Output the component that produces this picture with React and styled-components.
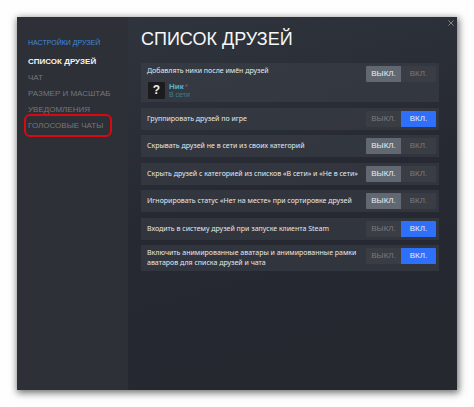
import { useState } from 'react'
import styled, { createGlobalStyle } from 'styled-components';

const sections = ["Список друзей", "Чат", "Размер и масштаб", "Уведомления", "Голосовые чаты"];

const options = [
    { id: "nicks", label: "Добавлять ники после имён друзей", on: false, preview: true },
    { id: "group", label: "Группировать друзей по игре", on: true },
    { id: "offline", label: "Скрывать друзей не в сети из своих категорий", on: false },
    { id: "category", label: "Скрыть друзей с категорией из списков «В сети» и «Не в сети»", on: false },
    { id: "away", label: "Игнорировать статус «Нет на месте» при сортировке друзей", on: false },
    { id: "login", label: "Входить в систему друзей при запуске клиента Steam", on: true },
    { id: "avatars", label: "Включить анимированные аватары и анимированные рамки аватаров для списка друзей и чата", on: true },
];

function Option({ option }) {
    const [on, setOn] = useState(option.on);
    return (
        <Row>
            <div>
                <Label id={option.id}>{option.label}</Label>
                {option.preview && (
                    <Friend>
                        <Avatar>?</Avatar>
                        <div>
                            <Nick>Ник<sup>*</sup></Nick>
                            <Status>В сети</Status>
                        </div>
                    </Friend>
                )}
            </div>
            <Toggle role="group" aria-labelledby={option.id}>
                <ToggleButton type="button" $active={!on} aria-pressed={!on} onClick={() => setOn(false)}>Выкл.</ToggleButton>
                <ToggleButton type="button" $on $active={on} aria-pressed={on} onClick={() => setOn(true)}>Вкл.</ToggleButton>
            </Toggle>
        </Row>
    )
}

export default function App() {
    const [current, setCurrent] = useState(sections[0]);
    return (
        <Page>
            <GlobalStyle />
            <Dialog>
                <Sidebar>
                    <SidebarTitle>Настройки друзей</SidebarTitle>
                    {sections.map((name, i) => (
                        <SectionButton
                            key={name}
                            type="button"
                            $current={name === current}
                            $marked={i === sections.length - 1}
                            onClick={() => setCurrent(name)}
                        >
                            {name}
                        </SectionButton>
                    ))}
                </Sidebar>
                <Content>
                    <Title>Список друзей</Title>
                    <Options>
                        {options.map(option => <Option key={option.id} option={option} />)}
                    </Options>
                </Content>
                <Close type="button" aria-label="Закрыть">
                    <svg width="6" height="6" viewBox="0 0 6 6" stroke="currentColor" strokeWidth="0.7">
                        <path d="M0.4 0.4L5.6 5.6M5.6 0.4L0.4 5.6" />
                    </svg>
                </Close>
            </Dialog>
        </Page>
    )
}

const GlobalStyle = createGlobalStyle`
  * {
    box-sizing: border-box;
  }
  body {
    margin: 0;
    background: #fefefe;
    font-family: "Liberation Sans", Arial, sans-serif;
  }
  button {
    border: 0;
    padding: 0;
    background: none;
    font: inherit;
    cursor: pointer;
  }
`;

const Page = styled.main`
  min-height: 100vh;
  display: flex;
  padding: 17px;
`;

const Dialog = styled.div`
  position: relative;
  flex: 1;
  display: flex;
  background: linear-gradient(165deg, #31363e 0%, #262931 50%, #25282f 100%);
  box-shadow: 1px 2px 7px 1px rgba(0, 0, 0, 0.55);
`;

const Sidebar = styled.nav`
  flex: 0 0 111px;
  display: flex;
  flex-direction: column;
  align-items: flex-start;
  padding: 20px 0 0 11px;
  background: #2d3037;
`;

const SidebarTitle = styled.h2`
  margin: 0 0 5px;
  font-size: 7px;
  line-height: 12px;
  font-weight: 400;
  text-transform: uppercase;
  color: #4389d8;
`;

const SectionButton = styled.button`
  position: relative;
  font-size: 8px;
  line-height: 16px;
  font-weight: ${p => p.$current ? 700 : 400};
  text-transform: uppercase;
  white-space: nowrap;
  color: ${p => p.$current ? "#f4f5f6" : "#74777d"};

  &::after {
    content: ${p => p.$marked ? '""' : "none"};
    position: absolute;
    inset: -4px -9px -3px -4px;
    border: 2px solid #d9090f;
    border-radius: 6px;
  }
`;

const Content = styled.section`
  flex: 1;
  min-width: 0;
  padding: 8px 18px 16px 13px;
`;

const Title = styled.h1`
  margin: 0 0 10px;
  font-size: 18px;
  line-height: 28px;
  font-weight: 400;
  text-transform: uppercase;
  color: #f6f7f8;
`;

const Options = styled.div`
  min-height: 208px;
  display: grid;
  align-content: space-between;
`;

const Row = styled.div`
  display: flex;
  justify-content: space-between;
  align-items: center;
  gap: 4px;
  padding: 3px 3px 3px 6px;
  background: rgba(62, 66, 73, 0.5);
`;

const Label = styled.div`
  font-family: "Noto Sans", "Liberation Sans", sans-serif;
  font-size: 7px;
  line-height: 10px;
  color: #e6e8eb;
`;

const Friend = styled.div`
  display: flex;
  align-items: center;
  gap: 4px;
  padding: 6px 0 0 1px;
`;

const Avatar = styled.div`
  width: 17px;
  height: 17px;
  border-radius: 1px;
  background: #1c1c1e;
  font-size: 12px;
  line-height: 17px;
  font-weight: 700;
  text-align: center;
  color: #f0f0f0;
`;

const Nick = styled.div`
  font-size: 8px;
  line-height: 8px;
  font-weight: 700;
  color: #55b5cf;

  sup {
    margin-left: 1px;
    font-size: 8px;
    line-height: 0;
    vertical-align: 0;
    color: #8b4a5c;
  }
`;

const Status = styled.div`
  font-size: 7px;
  line-height: 8px;
  color: #417f93;
`;

const Toggle = styled.div`
  flex: 0 0 70px;
  align-self: flex-start;
  display: grid;
  grid-template-columns: 1fr 1fr;
  border-radius: 1px;
  overflow: hidden;
  background: #3a3d44;
`;

const ToggleButton = styled.button`
  font-size: 8px;
  line-height: 16px;
  text-transform: uppercase;
  color: ${p => p.$active ? "#e8ebf0" : "#777a80"};
  background: ${p => !p.$active ? "transparent" : p.$on ? "#2f70fa" : "#616872"};
`;

const Close = styled.button`
  position: absolute;
  top: 3px;
  right: 3px;
  display: flex;
  padding: 0;
  color: #a9abb0;
`;
